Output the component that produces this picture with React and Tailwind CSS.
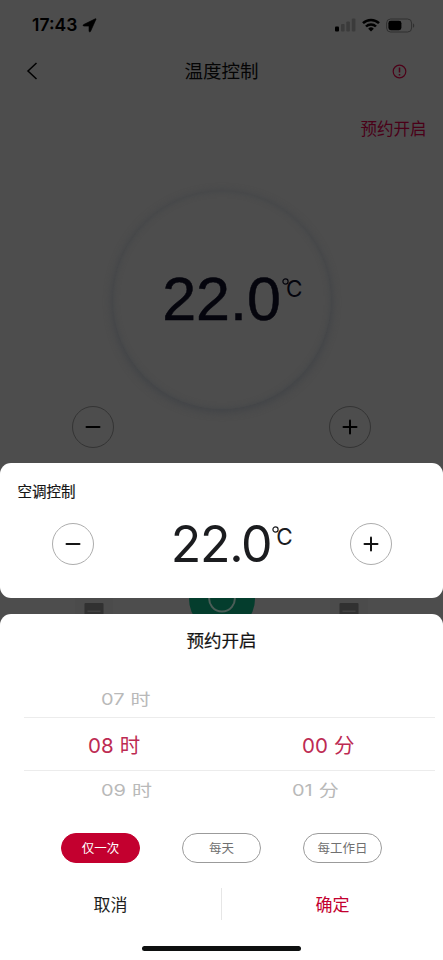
import { useState } from 'react'

const REPEATS = [
  { key: 'once',    label: '仅一次' },
  { key: 'daily',   label: '每天' },
  { key: 'workday', label: '每工作日' },
]

function StatusBar() {
  return (
    <div className="h-[50px] flex items-center pl-[32px] pr-[28px]">
      <span className="font-['Inter'] font-semibold text-[17.5px] leading-none text-black">17:43</span>
      <svg className="ml-[5px] mt-px w-[15px] h-[15px]" viewBox="0 0 15 15" fill="#000">
        <path d="M14 1.2 8.6 13.3c-.4.9-1.6.7-1.6-.3V8.1H2c-1 0-1.2-1.2-.3-1.6L13.3.8c.6-.2.9 0 .7.4Z" stroke="#000" strokeWidth=".6" strokeLinejoin="round" />
      </svg>
      <svg className="ml-auto w-[21px] h-[14px]" viewBox="0 0 21 14">
        <rect x="0" y="8.5" width="4" height="5" rx="1" fill="#000" />
        <rect x="6" y="6" width="3.6" height="7.5" rx="1" fill="#3b3b3b" />
        <rect x="11.3" y="3.5" width="3.6" height="10" rx="1" fill="#3b3b3b" />
        <rect x="16.8" y="0.5" width="3.6" height="13" rx="1" fill="#3b3b3b" />
      </svg>
      <svg className="ml-[6px] w-[18px] h-[14px]" viewBox="0 0 18 14" fill="none" stroke="#000" strokeWidth="2.5">
        <path d="M1 5.2a11.4 11.4 0 0 1 16 0" />
        <path d="M4 8.5a7 7 0 0 1 10 0" />
        <path d="M9 13.5 6.2 10.7a4 4 0 0 1 5.6 0Z" fill="#000" stroke="none" />
      </svg>
      <svg className="ml-[6px] w-[29px] h-[15px]" viewBox="0 0 29 15">
        <rect x=".6" y="1" width="25" height="13" rx="4" fill="none" stroke="#303030" />
        <rect x="2.4" y="2.8" width="13" height="9.4" rx="2.4" fill="#000" />
        <path d="M27 5.4c1.6.5 1.6 3.700 0 4.200Z" fill="#303030" />
      </svg>
    </div>
  )
}

function RoundButton({ plus, dim, onClick }) {
  return (
    <button
      onClick={onClick}
      className={'w-[42px] h-[42px] rounded-full border flex items-center justify-center ' + (dim ? 'border-[#343434]' : 'border-[#adadad]')}
    >
      <svg className="w-4 h-4" viewBox="0 0 16 16" stroke={dim ? '#000' : '#151515'} strokeWidth="2" strokeLinecap="round">
        <path d="M1.500 8h13" />
        {plus && <path d="M8 1.500v13" />}
      </svg>
    </button>
  )
}

function SeatIcon() {
  return (
    <div className="w-[38px] h-[24px] bg-[#4b4b4b] flex justify-center pt-[7px]">
      <svg className="w-5 h-4" viewBox="0 0 20 16">
        <rect x=".5" width="19" height="16" rx="1" fill="#313131" />
        <path d="M3.500 8.200h13" stroke="#454545" strokeWidth="1.300" />
      </svg>
    </div>
  )
}

function Background() {
  return (
    <div className="h-full bg-[#4d4d4d]">
      <StatusBar />

      <div className="h-[42px] flex items-center justify-between pl-[26px] pr-[36px]">
        <svg className="w-3 h-[18px]" viewBox="0 0 12 18" fill="none" stroke="#000" strokeWidth="1.500">
          <path d="M10.500 1 2 9l8.500 8" />
        </svg>
        <span className="text-[18.500px] text-[#050505] pl-[13px]">温度控制</span>
        <svg className="w-[15px] h-[15px]" viewBox="0 0 15 15" fill="none" stroke="#4d0018" strokeWidth="1.200">
          <circle cx="7.500" cy="7.500" r="6.300" />
          <path d="M7.500 3.500v5M7.500 9.900v1.500" strokeWidth="1.500" />
        </svg>
      </div>

      <div className="mt-[24px] flex justify-end pr-[16.500px] text-[16.500px] leading-[24px] text-[#4a0018]">预约开启</div>

      <div className="mt-[51px] mx-auto w-[218px] h-[218px] rounded-full shadow-[0_2px_7px_2px_#434548,inset_0_0_5px_1px_#46484a] flex items-center justify-center">
        <div className="flex pl-[21px] text-[#05050d] font-['Liberation_Sans']">
          <span className="-mt-px text-[61px] leading-[61px] [-webkit-text-stroke:0.5px]">22.0</span>
          <Degree className="mt-[8px] ml-px" />
        </div>
      </div>

      <div className="-mt-[3px] flex justify-between px-[72px]">
        <RoundButton dim />
        <RoundButton dim plus />
      </div>

      <div className="mt-[118px] flex items-start justify-between px-[75px]">
        <div className="pt-[30px]"><SeatIcon /></div>
        <div className="w-[66px] h-[66px] rounded-full bg-[#043d2d] flex items-center justify-center">
          <svg className="w-7 h-7" viewBox="0 0 28 28" fill="none" stroke="#4b5d57" strokeWidth="2">
            <path d="M8 2.500a12.800 12.800 0 1 0 12 0M14 1v11" />
          </svg>
        </div>
        <div className="pt-[30px]"><SeatIcon /></div>
      </div>
    </div>
  )
}

function Degree({ className }) {
  return (
    <span className={'flex items-start h-5 ' + className}>
      <svg className="w-[7px] h-[7px]" viewBox="0 0 7 7" fill="none" stroke="currentColor" strokeWidth="1.200">
        <circle cx="3.500" cy="3.500" r="2.600" />
      </svg>
      <span className="-mt-px -ml-[3px] font-['Inter'] text-[22.500px] leading-[24px] tracking-tight">C</span>
    </span>
  )
}

function ClimateCard() {
  const [temp, setTemp] = useState(22)

  return (
    <div className="h-[135px] bg-white rounded-[11px]">
      <h2 className="pt-[17px] pl-[17.500px] text-[14.500px] leading-[22px] text-[#151515] [-webkit-text-stroke:0.2px]">空调控制</h2>
      <div className="mt-[21px] flex items-center justify-between px-[51.500px]">
        <RoundButton onClick={() => setTemp(temp - 0.5)} />
        <div className="flex h-[42px] items-center pl-[20px] text-[#1b1c1f]">
          <span className="font-['Inter'] text-[50px] leading-[50px] tracking-[-1.300px]">{temp.toFixed(1)}</span>
          <Degree className="-mt-[17px] ml-px" />
        </div>
        <RoundButton plus onClick={() => setTemp(temp + 0.5)} />
      </div>
    </div>
  )
}

function Slot({ n, unit }) {
  return (
    <span className="inline-flex items-center gap-[6px] leading-[26px]">
      <span className="font-['Inter']">{n}</span>
      <span className="-mt-[4px]">{unit}</span>
    </span>
  )
}

function SideRow({ hour, minute }) {
  return (
    <div className="h-[26px] flex items-center text-[20px] text-[#b9b9b9] scale-y-[0.8]">
      <span className="w-[267px] pl-[101px]"><Slot n={hour} unit="时" /></span>
      <span className="pl-[25px]">{minute && <Slot n={minute} unit="分" />}</span>
    </div>
  )
}

function ScheduleSheet() {
  const [repeat, setRepeat] = useState('once')

  return (
    <div className="h-[346px] bg-white rounded-t-[11px]">
      <h2 className="pt-[14px] text-center text-[17.500px] leading-[24px] text-[#151515] [-webkit-text-stroke:0.2px]">预约开启</h2>

      <div className="pt-[34px]">
        <SideRow hour="07" />
        <div className="mt-[5px] ml-[24px] mr-[8px] h-[54px] border-y border-[#ececec] flex items-center text-[20.500px] text-[#bd2a52]">
          <span className="w-[214px] pl-[64px]"><Slot n="08" unit="时" /></span>
          <span className="pl-[64px]"><Slot n="00" unit="分" /></span>
        </div>
        <div className="mt-[6px]"><SideRow hour="09" minute="01" /></div>
      </div>

      <div className="mt-[30px] flex justify-between px-[61px]">
        {REPEATS.map(r => (
          <button
            key={r.key}
            onClick={() => setRepeat(r.key)}
            className={'w-[79px] h-[30px] rounded-full border text-[12.500px] ' +
              (repeat === r.key ? 'bg-[#c3002f] border-[#c3002f] text-white' : 'border-[#9b9b9b] text-[#707070]')}
          >
            {r.label}
          </button>
        ))}
      </div>

      <div className="mt-[25px] h-[32px] flex items-center text-[17px]">
        <button className="flex-1 text-[#1e1e20]">取消</button>
        <div className="w-px h-full bg-[#e6e6e6]" />
        <button className="flex-1 text-[#c3002f]">确定</button>
      </div>

      <div className="mt-[26px] mx-auto w-[159px] h-[5px] rounded-full bg-[#0e1010]" />
    </div>
  )
}

export default function App() {
  return (
    <div className="relative w-[443px] h-[960px] overflow-hidden font-['Noto_Sans_CJK_SC',sans-serif]">
      <Background />
      <div className="absolute inset-x-0 bottom-0 flex flex-col gap-4">
        <ClimateCard />
        <ScheduleSheet />
      </div>
    </div>
  )
}
